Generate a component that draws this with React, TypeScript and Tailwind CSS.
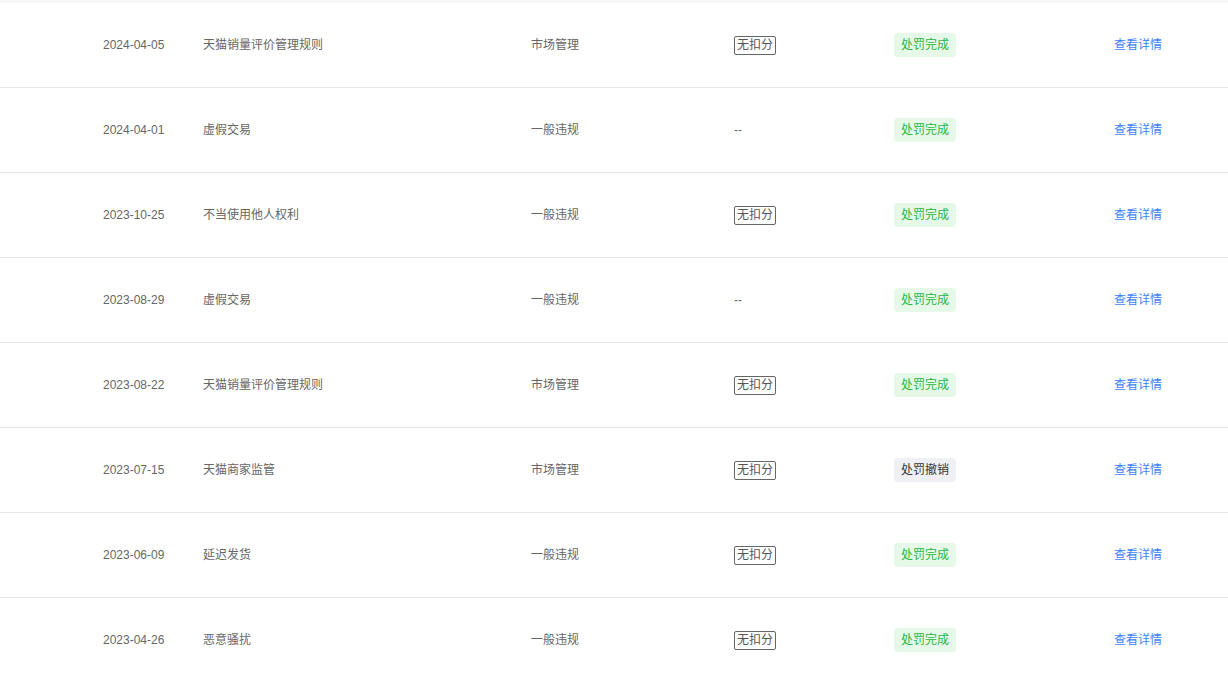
import React from "react";

type Row = { date: string; title: string; cat: string; score: boolean; done: boolean };

const rows: Row[] = [
  { date: "2024-04-05", title: "天猫销量评价管理规则", cat: "市场管理", score: true, done: true },
  { date: "2024-04-01", title: "虚假交易", cat: "一般违规", score: false, done: true },
  { date: "2023-10-25", title: "不当使用他人权利", cat: "一般违规", score: true, done: true },
  { date: "2023-08-29", title: "虚假交易", cat: "一般违规", score: false, done: true },
  { date: "2023-08-22", title: "天猫销量评价管理规则", cat: "市场管理", score: true, done: true },
  { date: "2023-07-15", title: "天猫商家监管", cat: "市场管理", score: true, done: false },
  { date: "2023-06-09", title: "延迟发货", cat: "一般违规", score: true, done: true },
  { date: "2023-04-26", title: "恶意骚扰", cat: "一般违规", score: true, done: true },
];

export default function App() {
  return (
    <div
      className="w-[1228px] h-[682px] overflow-hidden bg-white text-[12px] text-[#666]"
      style={{ fontFamily: '"Liberation Sans", "Noto Sans CJK SC", sans-serif' }}
    >
      <div className="h-[3px] bg-[#f5f6f8]" />
      {rows.map((r, i) => (
        <div key={i} className="flex items-center h-[85px] border-b border-[#e8e8e8] pl-[103px]">
          <div className="w-[100px]">{r.date}</div>
          <div className="w-[328px]">{r.title}</div>
          <div className="w-[203px]">{r.cat}</div>
          <div className="w-[160px]">
            {r.score ? (
              <span className="inline-block border border-[#666] rounded-[2px] px-[2px] leading-[17px] text-[#555]">
                无扣分
              </span>
            ) : (
              <span>--</span>
            )}
          </div>
          <div className="w-[220px]">
            {r.done ? (
              <span className="inline-flex items-center h-[24px] px-[7px] rounded-[4px] bg-[#e6f9e9] text-[#29b43c]">
                处罚完成
              </span>
            ) : (
              <span className="inline-flex items-center h-[24px] px-[7px] rounded-[4px] bg-[#eff0f3] text-[#333]">
                处罚撤销
              </span>
            )}
          </div>
          <div className="text-[#3d7fff]">查看详情</div>
        </div>
      ))}
    </div>
  );
}
